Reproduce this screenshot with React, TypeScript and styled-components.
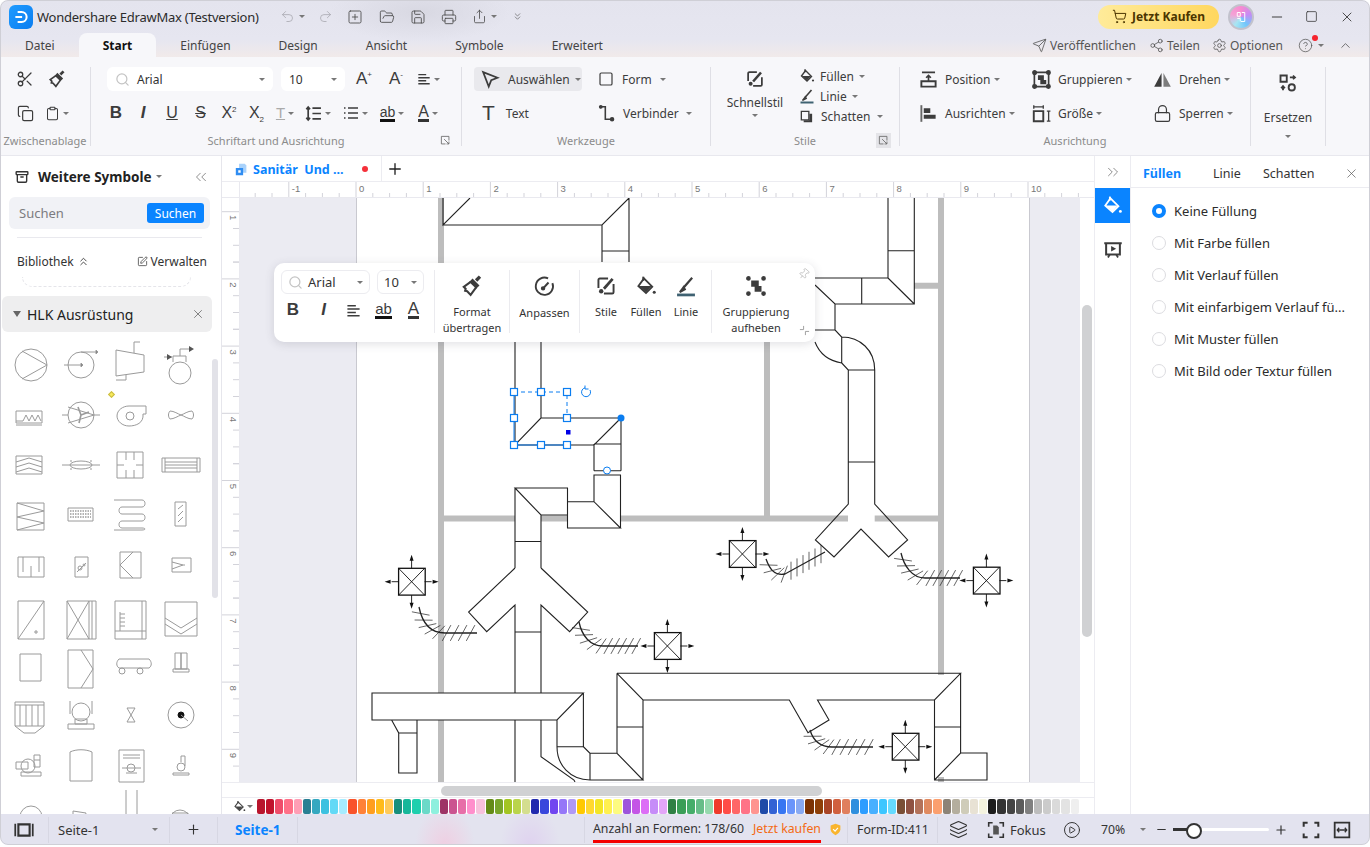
import * as React from 'react'
import styled, { createGlobalStyle } from 'styled-components'
import {
  Undo2, Redo2, SquarePlus, FolderOpen, Save, Printer, Share, ChevronsDown, ShoppingCart, Minus, Square, X,
  Send, Share2, Settings, CircleHelp, ChevronUp, Scissors, Copy, Clipboard, Search, ChevronsLeft, ChevronsRight,
  ChevronsUp, SquarePen, Plus, Lock, Layers, CirclePlay, Pin, Archive
} from 'lucide-react'

const GlobalStyle = createGlobalStyle`
  html, body { margin: 0; padding: 0; background: #fff; }
  body { font-family: "Noto Sans", "Noto Sans CJK SC", sans-serif; font-size: 12px; color: #333; }
  * { box-sizing: border-box; }
`

const Window = styled.div`
  position: relative;
  width: 1370px;
  height: 845px;
  display: flex;
  flex-direction: column;
  overflow: hidden;
  border-radius: 8px;
  background: #fff;
  &::after {
    content: '';
    position: absolute;
    inset: 0;
    border: 1px solid #cfcfd6;
    border-radius: 8px;
    pointer-events: none;
  }
`

const Chrome = styled.header`
  flex: none;
  background:
    radial-gradient(ellipse 90px 30px at 420px 12px, #d8d8e2 0%, transparent 100%),
    linear-gradient(180deg, #e4e4ee 0%, #e6e6f0 70%, #f1eaea 100%);
`

const TitleBar = styled.div`
  height: 33px;
  display: flex;
  align-items: center;
  padding-left: 9px;
`

const Logo = styled.div`
  width: 24px;
  height: 24px;
  border-radius: 6px;
  background: linear-gradient(135deg, #1f9bff, #0b7df0);
  display: flex;
  align-items: center;
  justify-content: center;
`

const AppTitle = styled.div`
  width: 244px;
  padding-left: 4px;
  font-size: 13px;
  letter-spacing: -0.25px;
  color: #2c2c2c;
  white-space: nowrap;
`

const Quick = styled.div<{ $w: number; $off?: boolean }>`
  width: ${p => p.$w}px;
  display: flex;
  align-items: center;
  justify-content: center;
  gap: 4px;
  color: ${p => (p.$off ? '#a9a9b0' : '#4a4a4a')};
`

const TitleRight = styled.div`
  margin-left: auto;
  display: flex;
  align-items: center;
  padding-right: 6px;
`

const BuyPill = styled.div`
  width: 121px;
  height: 24px;
  border-radius: 12px;
  background: linear-gradient(90deg, #ffeb9a, #ffd75f);
  display: flex;
  align-items: center;
  justify-content: center;
  gap: 5px;
  font-size: 12px;
  font-weight: 700;
  color: #4b3500;
`

const Avatar = styled.div`
  width: 26px;
  height: 26px;
  margin: 0 5px 0 9px;
  border-radius: 50%;
  border: 2px solid #c2c2cc;
  background: conic-gradient(#f78bd0, #c58bf5, #72c6fb, #a7e6f2, #f5a1d5, #f78bd0);
  display: flex;
  align-items: center;
  justify-content: center;
`

const WinControl = styled.div`
  width: 35px;
  display: flex;
  align-items: center;
  justify-content: center;
  color: #333;
`

const TabBar = styled.div`
  height: 24px;
  display: flex;
  align-items: stretch;
  padding-left: 1px;
`

const RibbonTab = styled.div<{ $active?: boolean }>`
  padding: 0 24px;
  display: flex;
  align-items: center;
  font-size: 12px;
  border-radius: 8px 8px 0 0;
  font-weight: ${p => (p.$active ? 700 : 400)};
  color: ${p => (p.$active ? '#111' : '#444')};
  background: ${p => (p.$active ? '#f7f7fa' : 'transparent')};
`

const TabActions = styled.div`
  margin-left: auto;
  display: flex;
  align-items: center;
  padding-right: 17px;
  color: #555;
  font-size: 12px;
`

const TabAction = styled.span<{ $mr?: number }>`
  display: flex;
  align-items: center;
  gap: 3px;
  margin-right: ${p => p.$mr ?? 11}px;
  position: relative;
`

const RedDot = styled.i`
  position: absolute;
  top: -3px;
  right: 6px;
  width: 6px;
  height: 6px;
  border-radius: 50%;
  background: #f5242e;
`

const Ribbon = styled.div`
  flex: none;
  height: 99px;
  display: flex;
  background: #f7f7fa;
  border-bottom: 1px solid #e8e8ee;
`

const Group = styled.section<{ $w: number }>`
  width: ${p => p.$w}px;
  display: flex;
  flex-direction: column;
  padding-top: 10px;
`

const GroupSep = styled.div`
  width: 1px;
  margin: 10px 0 9px;
  background: #dfdfe5;
`

const Rows = styled.div`
  flex: 1;
  display: flex;
  flex-direction: column;
  gap: 10px;
`

const Row = styled.div<{ $pl?: number; $gap?: number }>`
  height: 24px;
  display: flex;
  align-items: center;
  padding-left: ${p => p.$pl ?? 0}px;
  gap: ${p => p.$gap ?? 0}px;
`

const Tool = styled.div<{ $w: number; $off?: boolean; $ml?: number }>`
  width: ${p => p.$w}px;
  height: 24px;
  flex: none;
  margin-left: ${p => p.$ml ?? 0}px;
  display: flex;
  align-items: center;
  justify-content: center;
  gap: 3px;
  color: ${p => (p.$off ? '#aaa' : '#3c3c3c')};
`

const Glyph = styled.span<{ $size?: number; $weight?: number; $italic?: boolean; $line?: string; $bar?: string }>`
  font-family: "Liberation Sans", sans-serif;
  font-size: ${p => p.$size ?? 15}px;
  font-weight: ${p => p.$weight ?? 400};
  font-style: ${p => (p.$italic ? 'italic' : 'normal')};
  text-decoration: ${p => p.$line ?? 'none'};
  border-bottom: ${p => (p.$bar ? `3px solid ${p.$bar}` : 'none')};
  line-height: ${p => (p.$bar ? '14px' : '18px')};
  color: inherit;
  sup, sub { font-size: 8px; line-height: 0; }
`

const Caret = styled.i<{ $ml?: number; $mt?: number }>`
  display: inline-block;
  flex: none;
  margin-left: ${p => p.$ml ?? 0}px;
  margin-top: ${p => p.$mt ?? 0}px;
  border-left: 3px solid transparent;
  border-right: 3px solid transparent;
  border-top: 3.5px solid #777;
`

const Combo = styled.div<{ $w: number; $float?: boolean; $ml?: number }>`
  width: ${p => p.$w}px;
  height: 24px;
  flex: none;
  margin-left: ${p => p.$ml ?? 0}px;
  padding: 0 ${p => (p.$float ? 6 : 8)}px;
  border-radius: 6px;
  background: #fff;
  border: ${p => (p.$float ? '1px solid #ececf0' : 'none')};
  display: flex;
  align-items: center;
  gap: ${p => (p.$float ? 5 : 7)}px;
  font-size: ${p => (p.$float ? 13 : 12)}px;
  color: #333;
  i { margin-left: auto; }
`

const LabeledTool = styled.div<{ $w?: number; $bg?: boolean; $gap?: number; $ph?: number }>`
  width: ${p => (p.$w ? `${p.$w}px` : 'auto')};
  height: 24px;
  flex: none;
  display: flex;
  align-items: center;
  gap: ${p => p.$gap ?? 8}px;
  padding-left: ${p => p.$ph ?? 0}px;
  border-radius: 4px;
  background: ${p => (p.$bg ? '#e9e9ed' : 'transparent')};
  color: #3c3c3c;
  font-size: 12px;
  white-space: nowrap;
`

const GroupLabel = styled.div<{ $flush?: boolean }>`
  height: 18px;
  margin: 5px 0 6px;
  padding: 0 ${p => (p.$flush ? 0 : 8)}px;
  display: grid;
  grid-template-columns: 1fr auto 1fr;
  align-items: center;
  font-size: 11px;
  color: #8b8b8b;
  white-space: nowrap;
  span { grid-column: 2; }
`

const DialogCorner = styled.b<{ $bg?: boolean }>`
  grid-column: 3;
  justify-self: end;
  width: 15px;
  height: 15px;
  display: flex;
  align-items: center;
  justify-content: center;
  background: ${p => (p.$bg ? '#e4e4e8' : 'transparent')};
  color: #666;
`

const Columns = styled.div<{ $pl?: number }>`
  flex: 1;
  display: flex;
  padding-left: ${p => p.$pl ?? 0}px;
`

const StackTool = styled.div<{ $w: number; $pt?: number }>`
  width: ${p => p.$w}px;
  flex: none;
  padding-top: ${p => p.$pt ?? 0}px;
  display: flex;
  flex-direction: column;
  align-items: center;
  color: #3c3c3c;
  font-size: 12px;
`

const StackLabel = styled.span<{ $mt: number }>`
  margin-top: ${p => p.$mt}px;
`

const MiniRows = styled.div`
  display: flex;
  flex-direction: column;
  margin-top: -1px;
`

const MiniRow = styled.div<{ $gap?: number }>`
  height: 20px;
  display: flex;
  align-items: center;
  gap: ${p => p.$gap ?? 5}px;
  font-size: 12px;
  color: #3c3c3c;
`

const ToolColumn = styled.div<{ $w: number }>`
  width: ${p => p.$w}px;
  display: flex;
  flex-direction: column;
  gap: 10px;
`

const Main = styled.div`
  flex: none;
  height: 658px;
  display: flex;
`

const Library = styled.aside`
  position: relative;
  width: 222px;
  flex: none;
  overflow: hidden;
  border-right: 1px solid #e6e6ec;
`

const LibHead = styled.div`
  height: 41px;
  display: flex;
  align-items: center;
  padding: 0 11px 0 15px;
  color: #333;
  strong { margin-left: 9px; font-size: 13.5px; color: #222; }
  i { margin-left: 4px; }
  svg:last-child { margin-left: auto; color: #777; }
`

const SearchBox = styled.div`
  height: 32px;
  margin: 0 11px 0 9px;
  padding: 0 6px 0 10px;
  border-radius: 6px;
  background: #f1f2f6;
  display: flex;
  align-items: center;
  justify-content: space-between;
  font-size: 13px;
  color: #7c7c80;
`

const SearchButton = styled.div`
  width: 57px;
  height: 20px;
  border-radius: 3px;
  background: #0a84ff;
  color: #fff;
  font-size: 12px;
  display: flex;
  align-items: center;
  justify-content: center;
`

const LibDivider = styled.div`
  height: 1px;
  margin: 8px 19px 0 17px;
  background: #e9e9ee;
`

const LibRow = styled.div`
  height: 47px;
  padding: 0 14px 0 17px;
  display: flex;
  align-items: center;
  justify-content: space-between;
  font-size: 12.5px;
  color: #333;
`

const LibLink = styled.span`
  display: flex;
  align-items: center;
  gap: 3px;
  font-size: 12px;
`

const DashedEnd = styled.div`
  height: 10px;
  margin: -8px 30px 9px 22px;
  border: 1px dashed #e5e5ea;
  border-top: none;
  border-radius: 0 0 10px 10px;
`

const SectionHead = styled.div`
  height: 36px;
  margin: 0 9px 0 2px;
  padding: 0 7px 0 11px;
  border-radius: 6px;
  background: #eeeeef;
  display: flex;
  align-items: center;
  gap: 6px;
  font-size: 14px;
  color: #222;
  svg { margin-left: auto; color: #555; }
`

const DownTri = styled.i`
  border-left: 4px solid transparent;
  border-right: 4px solid transparent;
  border-top: 6px solid #666;
`

const SymbolGrid = styled.div`
  position: relative;
  padding: 8px 0 0 6px;
  display: grid;
  grid-template-columns: repeat(4, 50px);
  grid-auto-rows: 50px;
`

const YellowDot = styled.i`
  position: absolute;
  left: 109px;
  top: 60px;
  width: 5px;
  height: 5px;
  transform: rotate(45deg);
  background: #f7e95a;
  border: 1px solid #c9bb45;
`

const LibScroll = styled.div`
  position: absolute;
  right: 3px;
  top: 203px;
  width: 6px;
  height: 239px;
  border-radius: 3px;
  background: #e2e2e8;
`

const Center = styled.div`
  width: 872px;
  flex: none;
  display: flex;
  flex-direction: column;
  background: #fff;
`

const DocTabs = styled.div`
  height: 26px;
  display: flex;
  align-items: center;
  border-bottom: 1px solid #ececf1;
`

const DocTab = styled.div`
  width: 160px;
  height: 25px;
  padding: 1px 0 0 13px;
  display: flex;
  align-items: center;
  gap: 5px;
  border-right: 1px solid #ececf1;
  font-size: 12.5px;
  font-weight: 700;
  color: #0a84ff;
  white-space: pre;
  i { width: 6px; height: 6px; margin-left: 13px; border-radius: 50%; background: #f5303a; }
`

const AddTab = styled.div`
  margin-left: 4px;
  color: #222;
  display: flex;
`

const RulerRow = styled.div`
  height: 16px;
  display: flex;
  background: #fff;
  border-bottom: 1px solid #e9e9ef;
`

const RulerCorner = styled.div`
  width: 18px;
  border-right: 1px solid #e9e9ef;
`

const CanvasRow = styled.div`
  height: 584px;
  display: flex;
`

const VRuler = styled.div`
  width: 18px;
  flex: none;
  overflow: hidden;
  border-right: 1px solid #e9e9ef;
`

const Canvas = styled.div`
  position: relative;
  width: 840px;
  flex: none;
  padding-left: 116px;
  background: #ebebf2;
`

const Page = styled.div`
  width: 674px;
  height: 584px;
  background: #fff;
  border-left: 1px solid #c9c9d0;
  border-right: 1px solid #c9c9d0;
  svg { display: block; margin-left: -1px; }
`

const VScrollTrack = styled.div`
  position: relative;
  flex: 1;
  background: #fff;
`

const VScrollThumb = styled.div`
  position: absolute;
  left: 2px;
  top: 107px;
  width: 10px;
  height: 332px;
  border-radius: 5px;
  background: #d0d1d3;
`

const HScrollRow = styled.div`
  height: 15px;
  padding: 3px 0 0 219px;
  border-top: 1px solid #ececf1;
  background: #fff;
`

const HScrollThumb = styled.div`
  width: 381px;
  height: 10px;
  border-radius: 5px;
  background: #d0d1d3;
`

const PaletteRow = styled.div`
  height: 17px;
  display: flex;
  align-items: center;
  padding-left: 11px;
  color: #444;
  border-top: 1px solid #ececf1;
`

const Palette = styled.div`
  margin-left: 4px;
  display: grid;
  grid-template-columns: repeat(91, 8.15px);
  column-gap: 1px;
`

const Swatch = styled.i<{ $c: string }>`
  height: 15px;
  border-radius: 2px;
  background: ${p => p.$c};
`

const Floating = styled.div`
  position: absolute;
  left: 34px;
  top: 65px;
  width: 541px;
  height: 79px;
  padding: 7px 0 0 7px;
  border-radius: 10px;
  background: #fff;
  box-shadow: 0 2px 10px rgba(60, 60, 80, 0.16);
  display: flex;
  color: #3c3c3c;
`

const FloatFont = styled.div`
  width: 153px;
  flex: none;
  display: flex;
  flex-wrap: wrap;
  gap: 4px 7px;
  align-content: flex-start;
`

const FloatSep = styled.div<{ $ml?: number }>`
  width: 1px;
  height: 63px;
  flex: none;
  margin-left: ${p => p.$ml ?? 0}px;
  background: #ebebef;
`

const FloatTool = styled.div<{ $w: number; $ml?: number }>`
  width: ${p => p.$w}px;
  flex: none;
  margin-left: ${p => p.$ml ?? 0}px;
  padding-top: 5px;
  display: flex;
  flex-direction: column;
  align-items: center;
  font-size: 11px;
  line-height: 16px;
  text-align: center;
  color: #333;
  svg { margin-bottom: 7px; color: #3c3c3c; }
`

const FloatPin = styled.div`
  position: absolute;
  right: 5px;
  top: 5px;
  color: #aaa;
  display: flex;
  svg { transform: rotate(40deg); }
`

const FloatCorner = styled.div`
  position: absolute;
  right: 5px;
  bottom: 6px;
  color: #999;
  display: flex;
`

const Rail = styled.div`
  width: 37px;
  flex: none;
  border-left: 1px solid #ececf1;
  border-right: 1px solid #ececf1;
  display: flex;
  flex-direction: column;
  align-items: center;
`

const RailBtn = styled.div<{ $active?: boolean; $h: number }>`
  width: 100%;
  height: ${p => p.$h}px;
  display: flex;
  align-items: center;
  justify-content: center;
  background: ${p => (p.$active ? '#0a84ff' : 'transparent')};
  color: ${p => (p.$active ? '#fff' : '#3c3c3c')};
`

const FillPanel = styled.div`
  flex: 1;
  display: flex;
  flex-direction: column;
`

const FillTabs = styled.div`
  height: 32px;
  display: flex;
  align-items: center;
  padding: 3px 11px 0 12px;
  border-bottom: 1px solid #ececf1;
  font-size: 12.5px;
  color: #333;
  svg { margin-left: auto; color: #555; }
`

const FillTab = styled.span<{ $active?: boolean; $w: number }>`
  width: ${p => p.$w}px;
  font-weight: ${p => (p.$active ? 700 : 400)};
  color: ${p => (p.$active ? '#0a84ff' : '#333')};
`

const RadioList = styled.div`
  padding: 7px 0 0 21px;
  display: flex;
  flex-direction: column;
`

const RadioRow = styled.div`
  height: 32px;
  display: flex;
  align-items: center;
  gap: 8px;
  font-size: 13px;
  color: #2c2c2c;
  white-space: nowrap;
`

const Radio = styled.i<{ $on?: boolean }>`
  width: 14px;
  height: 14px;
  border-radius: 50%;
  border: ${p => (p.$on ? '4px solid #0a84ff' : '1px solid #dcdce0')};
  background: #fff;
`

const StatusBar = styled.footer`
  flex: none;
  height: 31px;
  display: flex;
  align-items: center;
  font-size: 12.3px;
  color: #333;
  background:
    radial-gradient(ellipse 30px 40px at 445px 32px, #efcfe2 0%, transparent 100%),
    radial-gradient(ellipse 30px 40px at 530px 32px, #dfd2ef 0%, transparent 100%),
    #e3e3ef;
`

const StatusCell = styled.div<{ $w: number; $sep?: boolean; $pl?: number; $center?: boolean }>`
  width: ${p => p.$w}px;
  height: 26px;
  flex: none;
  display: flex;
  align-items: center;
  justify-content: ${p => (p.$center ? 'center' : 'flex-start')};
  gap: 5px;
  padding-left: ${p => p.$pl ?? 0}px;
  border-right: ${p => (p.$sep ? '1px solid #d7d7e3' : 'none')};
  white-space: nowrap;
`

const PageName = styled.span`
  font-size: 13px;
`

const ActivePage = styled.b`
  font-size: 13.5px;
  color: #0a84ff;
`

const ShapeCount = styled.span`
  display: flex;
  gap: 9px;
  padding-bottom: 4px;
  margin-top: 4px;
  border-bottom: 3px solid #f40000;
  line-height: 15px;
  em { font-style: normal; color: #f36a13; }
`

const ShieldSlot = styled.span`
  margin-left: 3px;
  display: flex;
`

const ZoomSlider = styled.div`
  position: relative;
  width: 96px;
  height: 3px;
  margin-left: 4px;
  border-radius: 2px;
  background: #fff;
  &::before {
    content: '';
    position: absolute;
    left: 0;
    top: 0;
    width: 20px;
    height: 3px;
    background: #333;
  }
  &::after {
    content: '';
    position: absolute;
    left: 13px;
    top: -5px;
    width: 12px;
    height: 12px;
    border-radius: 50%;
    border: 2px solid #333;
    background: #fff;
  }
`

const Ico: React.FC<{ s?: number; sw?: number; children: React.ReactNode }> = ({ s = 18, sw = 1.4, children }) => (
  <svg viewBox="0 0 16 16" width={s} height={s} fill="none" stroke="currentColor" strokeWidth={sw}>
    {children}
  </svg>
)

const BrushIcon = ({ s = 18 }: { s?: number }) => (
  <Ico s={s} sw={1.5}>
    <path d="M13.8 1.2 11 4" strokeWidth="2.4" />
    <path d="M8.4 3.6 12.4 7.6 11 9 7 5z" fill="currentColor" />
    <path d="M7 5 2 8.6 3.4 10 3 11.5 4.5 11.8 7 14.5 11 9" />
  </Ico>
)
const PointerIcon = () => (
  <Ico s={20}>
    <path d="M2.5 2.5 14 7 9 9 7 14z" />
  </Ico>
)
const ConnectorIcon = () => (
  <Ico s={18}>
    <path d="M3 2.5H6.5V13.5H11" />
    <circle cx="2.5" cy="2.5" r="1" fill="currentColor" />
    <circle cx="12.5" cy="13.5" r="1.3" fill="currentColor" />
  </Ico>
)
const QuickStyleIcon = ({ s = 20 }: { s?: number }) => (
  <Ico s={s}>
    <path d="M9.5 2.5H3.5a1 1 0 0 0-1 1v6M6.5 13.5h6a1 1 0 0 0 1-1v-6" />
    <path d="M12.8 2.8 6.5 10" strokeWidth="2" />
    <circle cx="4.5" cy="11.8" r="1.6" fill="currentColor" stroke="none" />
  </Ico>
)
const BucketIcon = ({ s = 16 }: { s?: number }) => (
  <Ico s={s}>
    <path d="M6.5 2.5 12.5 8.5 8 13 2.5 8z" />
    <path d="M3 8H12L8 12.6z" fill="currentColor" stroke="none" />
    <path d="M6 1.2v3" />
    <circle cx="14" cy="12.5" r="1.1" fill="currentColor" stroke="none" />
  </Ico>
)
const PenLineIcon = ({ s = 18, bar = '#3f6272' }: { s?: number; bar?: string }) => (
  <Ico s={s}>
    <path d="M12.5 2 6 9.5" strokeWidth="1.6" />
    <path d="M6.3 8.8 3.5 12.5 7.2 10.4z" fill="currentColor" />
    <path d="M1.5 14.5h13" stroke={bar} strokeWidth="2" />
  </Ico>
)
const ShadowIcon = () => (
  <Ico s={15}>
    <path d="M2.5 2.5h8v9h-8z" />
    <path d="M11 5h3v9H5v-2h6z" fill="currentColor" stroke="none" />
  </Ico>
)
const PositionIcon = () => (
  <Ico s={19}>
    <path d="M2.5 2h11M8 4.5v5M6 6.5 8 4.5 10 6.5" />
    <path d="M2 9.5h12v4.5H2z" strokeWidth="1.6" />
  </Ico>
)
const AlignIcon = () => (
  <Ico s={19}>
    <path d="M2 1v14" strokeWidth="1.6" stroke="#666" />
    <path d="M4 3.5h5.5v4H4zM4 9h10v3.5H4z" fill="currentColor" stroke="none" />
  </Ico>
)
const GroupIcon = ({ s = 19 }: { s?: number }) => (
  <Ico s={s}>
    <path d="M3 2h10a1 1 0 0 1 1 1v10a1 1 0 0 1-1 1H3a1 1 0 0 1-1-1V3a1 1 0 0 1 1-1z" />
    <path d="M5 4.5h5v4h2V12H7V8.5H5z" fill="currentColor" stroke="none" />
    <circle cx="2.2" cy="2.2" r="1.4" fill="currentColor" />
    <circle cx="13.8" cy="2.2" r="1.4" fill="currentColor" />
    <circle cx="2.2" cy="13.8" r="1.4" fill="currentColor" />
    <circle cx="13.8" cy="13.8" r="1.4" fill="currentColor" />
  </Ico>
)
const SizeIcon = () => (
  <Ico s={19}>
    <path d="M1.5 1v3M9.5 1v3M1.5 2.5h8M12.5 6h3M12.5 14.5h3M14 6v8.5" strokeWidth="1.1" />
    <path d="M1.5 6h8v8.5h-8z" strokeWidth="1.6" />
  </Ico>
)
const FlipIcon = () => (
  <Ico s={19}>
    <path d="M7.2 2.5V14H1z" fill="currentColor" stroke="none" />
    <path d="M8.8 2.5V14H15z" fill="#7c7c7c" stroke="none" />
  </Ico>
)
const ReplaceIcon = () => (
  <Ico s={20}>
    <path d="M2 2h5v5H2zM4 10.5v3.2M2.5 12.2 4 10.5l1.5 1.7" strokeWidth="1.5" />
    <circle cx="11" cy="11.5" r="2.5" strokeWidth="1.5" />
    <path d="M9.5 3.5h4M12 2l1.7 1.5L12 5" strokeWidth="1.3" />
  </Ico>
)
const CornerIcon = () => (
  <Ico s={11} sw={1.2}>
    <path d="M13 8V2H2v11h6" />
    <path d="M6 6 13 13M9.5 13H13V9.5" />
  </Ico>
)
const LinesIcon = ({ s = 16 }: { s?: number }) => (
  <Ico s={s} sw={1.6}>
    <path d="M1.5 3h9M1.5 6.5h13M1.5 10h9M1.5 13.5h13" />
  </Ico>
)
const LineSpacingIcon = () => (
  <Ico s={17} sw={1.6}>
    <path d="M3 2v12M1.2 4 3 2l1.8 2M1.2 12 3 14l1.8-2M7 3h8M7 8h8M7 13h8" />
  </Ico>
)
const BulletIcon = () => (
  <Ico s={16} sw={1.6}>
    <path d="M5 3h10M5 8h10M5 13h10M1 3h1.5M1 8h1.5M1 13h1.5" />
  </Ico>
)
const AdjustIcon = () => (
  <Ico s={23} sw={1.3}>
    <path d="M10.5 2.4a6 6 0 1 0 3 3.2" />
    <path d="M10.8 5.2 7.4 9" strokeWidth="1.4" />
    <circle cx="7" cy="9.3" r=".9" fill="currentColor" />
  </Ico>
)
const UngroupIcon = () => (
  <Ico s={22}>
    <path d="M4.5 4h5.5v4h2v4.2H7V8.5H4.5z" fill="currentColor" stroke="none" />
    <circle cx="2.5" cy="2.5" r="1" fill="currentColor" />
    <circle cx="13.5" cy="2.5" r="1" fill="currentColor" />
    <circle cx="2.5" cy="13.5" r="1" fill="currentColor" />
    <circle cx="13.5" cy="13.5" r="1" fill="currentColor" />
  </Ico>
)
const PresentIcon = () => (
  <Ico s={20}>
    <path d="M1 2.5h14M2.5 2.5v9h11v-9" strokeWidth="1.6" />
    <path d="M6.5 4.8 10.5 7 6.5 9.2z" fill="currentColor" stroke="none" />
    <path d="M4 14l1.5-2.5M12 14l-1.5-2.5" />
  </Ico>
)
const FocusIcon = () => (
  <Ico s={18}>
    <path d="M1.5 5V1.5H5M11 1.5h3.5V5M14.5 11v3.5H11M5 14.5H1.5V11" />
    <path d="M5.5 4H9l1.5 1.5V12h-5z" fill="#555" stroke="none" />
  </Ico>
)
const FitIcon = () => (
  <Ico s={18}>
    <path d="M1.5 1.5h13v13h-13z" strokeWidth="1.6" />
    <path d="M4 8h8M5.5 6 3.8 8l1.7 2M10.5 6l1.7 2-1.7 2" strokeWidth="1.2" />
  </Ico>
)
const FullIcon = () => (
  <Ico s={18} sw={1.8}>
    <path d="M1.5 5V1.5H5M11 1.5h3.5V5M14.5 11v3.5H11M5 14.5H1.5V11" />
  </Ico>
)
const PagesIcon = () => (
  <Ico s={20}>
    <path d="M1 3v10M15 3v10" />
    <path d="M3.5 3.5h9v9h-9z" strokeWidth="1.7" />
  </Ico>
)
const ShieldIcon = () => (
  <svg viewBox="0 0 16 16" width={13} height={13}>
    <path d="M2 3 8 1l6 2v5c0 3-3 5-6 7-3-2-6-4-6-7z" fill="#f9b52e" />
    <path d="M5 7.5 7.5 10 11 6" stroke="#fff" strokeWidth="1.4" fill="none" />
  </svg>
)
const DocIcon = () => (
  <svg viewBox="0 0 16 16" width={13} height={15}>
    <path d="M5 1h7l2 2v9H5z" fill="#a9d2fb" />
    <path d="M1 6h9v9H1z" fill="#2f8df2" />
    <path d="M4 9h3v3H4z" fill="#fff" />
  </svg>
)

const S: React.FC<{ children: React.ReactNode }> = ({ children }) => (
  <svg viewBox="0 0 50 50" width={50} height={50} fill="none" stroke="#9a9a9a" strokeWidth={1}>
    {children}
  </svg>
)

const symbols: React.ReactNode[] = [
  <>
    <circle cx="25" cy="25" r="16" />
    <path d="M16 11 41 25 16 39" />
  </>,
  <>
    <circle cx="25" cy="25" r="13" />
    <path d="M8 25H25M25 12H40" />
    <path d="M25 23v4l2-2zM40 10v4l2-2z" fill="#777" />
  </>,
  <>
    <path d="M10 10 38 15V32L10 36Z" />
    <path d="M28 13V2H34M20 35V40H10" />
  </>,
  <>
    <circle cx="24" cy="33" r="11" />
    <path d="M17 22V16H30V22M24 16V9H33M8 17H16" />
    <path d="M33 6v6l5-3zM11 14v6l5-3z" fill="#555" stroke="none" />
  </>,
  <>
    <path d="M10 21H36V33H10ZM10 35H36" />
    <path d="M10 31H17L20 25 23 31 26 25 29 31 32 25 35 31" />
  </>,
  <>
    <circle cx="25" cy="25" r="13" />
    <path d="M6 25H12M38 25H44M12 17 38 25 12 33" />
    <path d="M25 25 22 17M25 25 33 22M25 25 23 33" strokeWidth="1.6" />
  </>,
  <>
    <path d="M32 16H40V24H37C38 33 30 36 23 36 16 36 11 31 11 26 11 20 17 16 23 16Z" />
    <circle cx="24" cy="26" r="4" />
  </>,
  <path d="M14 21C18 21 22 24 25 25 28 24 32 21 36 21 38 23 38 27 36 29 32 29 28 26 25 25 22 26 18 29 14 29 12 27 12 23 14 21Z" />,
  <>
    <path d="M10 16H36V34H10Z" />
    <path d="M10 22 23 18 36 22M10 27 23 23 36 27M10 32 23 28 36 32" />
  </>,
  <>
    <path d="M6 25H44M14 21H16M34 21H36M14 29H16M34 29H36" />
    <ellipse cx="25" cy="25" rx="11" ry="4" />
  </>,
  <>
    <path d="M11 12H37V38H11ZM11 25H18M30 25H37M20 12V20M28 12V20M20 30V38M28 30V38" />
  </>,
  <>
    <path d="M6 18H44V32H6ZM9 18V32M41 18V32M9 22H41M9 25H41M9 28H41" />
  </>,
  <>
    <path d="M11 13H38V40H11Z" />
    <path d="M11 13 38 21 11 27 38 33 11 40" />
  </>,
  <>
    <path d="M12 18H37V31H12Z" />
    <path d="M14 21H35M14 24H35M14 27H35" strokeDasharray="1.5 1" strokeWidth="1.6" />
  </>,
  <path d="M8 10H36C40 10 40 17 36 17H16C12 17 12 24 16 24H36C40 24 40 31 36 31H16C12 31 12 38 16 38H36C40 38 40 40 36 40H8" />,
  <>
    <path d="M19 12H30V36H19Z" />
    <path d="M22 19 27 15M22 26 27 21M22 32 27 27" />
  </>,
  <path d="M12 17H38V37H12ZM17 17V32M25 26V37M33 17V32" />,
  <>
    <path d="M19 17H32V37H19Z" />
    <path d="M21 32 30 23" />
    <circle cx="24" cy="28" r="2" />
    <circle cx="28" cy="25" r="1" />
  </>,
  <path d="M14 12H35V38H14ZM14 25 27 12M14 25 27 38" />,
  <path d="M16 18H35V32H16ZM16 22 27 25 16 29M27 25 H29" />,
  <path d="M12 11H38V49H12ZM12 49 38 11M30 40V44M28 42H32" />,
  <path d="M11 11H40V49H11ZM11 11 33 49M33 11 11 49M33 11V49M36 11V49" />,
  <path d="M9 11H40V49H9ZM9 41H40M36 11V49M14 22V41M14 24H19M14 28H19M14 32H19M14 36H19" />,
  <path d="M9 12H41V46H9ZM9 28 25 38 41 28M9 34 25 44 41 34" />,
  <path d="M14 5H35V32H14Z" transform="translate(0 9)" />,
  <path d="M13 3H38V41H13ZM26 3 38 22 26 41" transform="translate(-1 7)" />,
  <>
    <path d="M13 19H43C46 22 46 26 43 28H13C10 26 10 22 13 19Z" />
    <circle cx="16" cy="31" r="3" />
    <circle cx="34" cy="31" r="3" />
  </>,
  <path d="M19 13H25V29H19ZM25 13H31V29H25ZM17 29H33V32H17Z" />,
  <path d="M9 12H38V36L29 43H18L9 36ZM9 15H38M14 15V36M20 15V36M26 15V36M32 15V36M9 36H38" />,
  <>
    <circle cx="25" cy="22" r="9" />
    <path d="M14 11V24M36 11V24M12 34H38V39H12ZM19 29H31V34H19Z" />
  </>,
  <path d="M21 18 29 18 21 32H29Z" />,
  <>
    <circle cx="25" cy="25" r="13" />
    <circle cx="25" cy="25" r="3" fill="#111" stroke="#111" />
    <path d="M25 25 32 31" />
  </>,
  <>
    <circle cx="22" cy="26" r="7" />
    <path d="M10 22H22V29H10ZM28 15H34V27H28ZM15 32H35V36H15ZM28 20H34" />
  </>,
  <path d="M14 12C20 9 30 9 36 12V41H14Z" />,
  <>
    <path d="M13 10H38V42H13ZM17 15H34M17 18H34M16 28H35M20 33H31" />
    <circle cx="25" cy="28" r="4" />
  </>,
  <>
    <circle cx="25" cy="27" r="4" />
    <path d="M25 22V16H29V26M17 33H33V35H17Z" />
  </>,
  <>
    <circle cx="25" cy="27" r="11" />
    <path d="M19 26 21 24 23 26 25 24 27 26 29 24 31 26" />
  </>,
  <path d="M17 21 30 23 28 32H17Z" />,
  <path d="M20 -2H31V30H20Z" />,
  <>
    <circle cx="24" cy="30" r="10" />
    <circle cx="24" cy="30" r="3" />
    <path d="M16 23H32V30" />
  </>
]

const lineDuct = `
M443 198V225L470 198M443 225H602L629 198V262M602 225V262M602 251H629
M515 342V445L541 418V342M541 418H621V470.7M594 444H621M515 445H594L621 418M594 444V470.7M594 470.7H621
M515 488H567.5V515H541L515 488ZM515 488V568M541 515V568M515 541.5H541M515 568 468.6 612 486.7 631.7 515 605V693M541 568 587.7 612 569.6 631.7 541 605V693M515 632H541
M567.5 501.7H594L620.5 528H567.5ZM594 501.7V475H620.5V528
M372 693H583.4L557 720H372ZM583.4 693V746.7L590 753.3V780M557 720V746.7H583.4M557 746.7C557 765 570 780 590 780
M515 720V782M541 720V756.7L574 780 575 782
M391.6 720 398.7 733V773H417V720M398.7 733H417
M590 753.3H617L643 780H590M643 700V780M617 673.3V753.3M617 727H643M617 673.3H960.6L934.5 700H817.5L829 720 808 732.7 789.3 700H643L617 673.3
M934.5 700V780H987V753H960.6L934.5 780M960.6 673.3V753M934.5 727H960.6
M888 198V278H815M914.3 198V304H835L815 285M888 250.7H914.3M888 278 914.3 304M861.7 278V304
M835 304V330L841.7 337V363L848.3 370V504L815.4 540 834 557 861 529 888.6 557 907.6 540 874.7 504V370C874.7 350 860 337 841.7 337M835 330H815M815 342C820 355 830 361 841.7 363M848.3 370H874.7M848 462H874.7
`

const walls =
  'M441 198V693M441 720V782M941 198V675M941 777V782M767 342V518M444 518.5H515M541 518.5H567.5M620.5 518.5H848M874.7 518.5H938M914 285.7H938'

const Damper: React.FC<{ cx: number; cy: number }> = ({ cx, cy }) => (
  <g>
    <rect x={cx - 13} y={cy - 13.4} width={26.6} height={26.8} fill="#fff" strokeWidth={1.3} />
    <path d={`M${cx - 13} ${cy - 13.4}L${cx + 13} ${cy + 13.4}M${cx + 13} ${cy - 13.4}L${cx - 13} ${cy + 13.4}`} />
    <path d={`M${cx} ${cy - 13.4}V${cy - 22}M${cx} ${cy + 13.4}V${cy + 22}M${cx - 13} ${cy}H${cx - 20}M${cx + 13} ${cy}H${cx + 20}`} />
    <path
      d={`M${cx} ${cy - 27}l-2 6h4zM${cx} ${cy + 27}l-2 -6h4zM${cx - 27} ${cy}l6 -2v4zM${cx + 27} ${cy}l-6 -2v4z`}
      fill="#111"
      stroke="none"
    />
  </g>
)

type P = [number, number]
const flexDucts: P[][] = [
  [[419, 607], [422, 622], [430, 633], [445, 633], [477, 633]],
  [[579, 622], [582, 636], [590, 646], [603, 646], [638, 646]],
  [[766, 559], [770, 570], [775, 576], [785, 574], [825, 552]],
  [[901, 553], [904, 566], [912, 578], [925, 578], [960, 578]],
  [[810, 730], [813, 740], [820, 747], [832, 747], [873, 747]]
]

const flexPath = (pts: P[]) => {
  const [a, b, c, d, e] = pts
  const samples: P[] = []
  for (let i = 0; i <= 40; i++) {
    const t = i / 40
    const u = 1 - t
    samples.push([
      u * u * u * a[0] + 3 * u * u * t * b[0] + 3 * u * t * t * c[0] + t * t * t * d[0],
      u * u * u * a[1] + 3 * u * u * t * b[1] + 3 * u * t * t * c[1] + t * t * t * d[1]
    ])
  }
  for (let i = 1; i <= 20; i++) {
    samples.push([d[0] + ((e[0] - d[0]) * i) / 20, d[1] + ((e[1] - d[1]) * i) / 20])
  }
  let ticks = ''
  let run = 0
  for (let i = 1; i < samples.length; i++) {
    const dx = samples[i][0] - samples[i - 1][0]
    const dy = samples[i][1] - samples[i - 1][1]
    const len = Math.hypot(dx, dy)
    run += len
    if (run >= 6.4) {
      run = 0
      const ang = Math.atan2(dy, dx) + Math.PI / 2 + 0.5
      const vx = Math.cos(ang) * 9
      const vy = Math.sin(ang) * 9
      const [x, y] = samples[i]
      ticks += `M${(x - vx).toFixed(1)} ${(y - vy).toFixed(1)}L${(x + vx).toFixed(1)} ${(y + vy).toFixed(1)}`
    }
  }
  return {
    curve: `M${a[0]} ${a[1]}C${b[0]} ${b[1]} ${c[0]} ${c[1]} ${d[0]} ${d[1]}L${e[0]} ${e[1]}`,
    ticks
  }
}

const Handle: React.FC<{ x: number; y: number }> = ({ x, y }) => (
  <rect x={x - 3.5} y={y - 3.5} width={7} height={7} fill="#fff" stroke="#0a7df0" strokeWidth={1.2} />
)

const Diagram = () => (
  <svg viewBox="356 198 674 584" width={674} height={584}>
    <path d={walls} fill="none" stroke="#bdbdbd" strokeWidth={6} />
    <path d={lineDuct} fill="none" stroke="#222" strokeWidth={1.1} />
    <g fill="none" stroke="#222">
      {flexDucts.map((pts, i) => {
        const f = flexPath(pts)
        return (
          <g key={i}>
            <path d={f.ticks} strokeWidth={0.7} />
            <path d={f.curve} strokeWidth={1.3} />
          </g>
        )
      })}
    </g>
    <g fill="none" stroke="#111" strokeWidth={0.9}>
      <Damper cx={411.6} cy={581.7} />
      <Damper cx={667.4} cy={646} />
      <Damper cx={742.4} cy={554} />
      <Damper cx={986.4} cy={580.6} />
      <Damper cx={905.3} cy={746.7} />
    </g>
    <path d="M514 392H567V418" fill="none" stroke="#0a7df0" strokeWidth={1} strokeDasharray="4 3" />
    <path d="M514 392V445H567" fill="none" stroke="#0a7df0" strokeWidth={1} />
    {[[514, 392], [541, 392], [567, 392], [514, 418], [567, 418], [514, 445], [541, 445], [567, 445]].map(([x, y]) => (
      <Handle key={`${x}-${y}`} x={x} y={y} />
    ))}
    <rect x={566} y={430} width={4.5} height={4.5} fill="#0000e6" />
    <circle cx={621} cy={418} r={3.5} fill="#0a7df0" />
    <circle cx={607} cy={470.5} r={3.5} fill="#fff" stroke="#0a7df0" />
    <path d="M590 390A4.5 4.5 0 1 1 585 387.8M585 385.5V389H588.5" fill="none" stroke="#0a7df0" strokeWidth={1} />
  </svg>
)

const RULER = 67.2
const HRuler = () => {
  const ticks = []
  for (let i = -2; i <= 10; i++) {
    for (let q = 0; q < 4; q++) {
      const x = 116 + i * RULER + (q * RULER) / 4
      if (x < 0 || x > 854) continue
      ticks.push(<path key={`${i}-${q}`} d={`M${x} ${q === 0 ? 0 : 11}V15`} stroke="#d3d3da" />)
    }
    if (i >= -1) {
      ticks.push(
        <text key={`l${i}`} x={116 + i * RULER + 3} y={10} fontSize={9.5} fill="#777" fontFamily="Liberation Sans">
          {i}
        </text>
      )
    }
  }
  return (
    <svg width={854} height={15}>
      {ticks}
    </svg>
  )
}

const VerticalRuler = () => {
  const ticks = []
  for (let i = 1; i <= 9; i++) {
    const y = 13.7 + (i - 1) * RULER
    for (let q = -1; q < 4; q++) {
      const yy = y + (q * RULER) / 4
      ticks.push(<path key={`${i}-${q}`} d={`M${q === 0 ? 0 : 11} ${yy}H18`} stroke="#d3d3da" />)
    }
    ticks.push(
      <text
        key={`l${i}`}
        x={8}
        y={y + 6}
        fontSize={9.5}
        fill="#777"
        fontFamily="Liberation Sans"
        transform={`rotate(90 8 ${y + 6})`}
        textAnchor="middle"
      >
        {i}
      </text>
    )
  }
  return (
    <svg width={18} height={584}>
      {ticks}
    </svg>
  )
}

const colors = [
  '#b9152d', '#c0122c', '#ef4d6a', '#ff7088', '#ff9eb5', '#2a7f93', '#35a8c0', '#3dc1e0', '#62d9f6', '#a6ecff',
  '#f9532a', '#ff8138', '#ff9e1f', '#ffbb1a', '#ffca58', '#178f7c', '#16b79a', '#1fcfae', '#6bd9c8', '#8ef0de',
  '#9e3366', '#cb5490', '#e76ea8', '#ff8fcc', '#f7c1dc', '#648b17', '#78a52b', '#a3c523', '#bad44c', '#d4de8f',
  '#2129ae', '#3947dc', '#7145f0', '#9577f8', '#b099f5', '#ffc900', '#ffd82f', '#f3e526', '#fff04f', '#fdfb80',
  '#9d55db', '#c455e6', '#dc6ef6', '#c68cf8', '#e3a6f8', '#2f8044', '#3a9e57', '#45ad6a', '#66bd88', '#95d9ae',
  '#ef3a2c', '#ff4d47', '#ff6767', '#ff7387', '#ff9490', '#1f4aa8', '#3362d4', '#3776f2', '#6a95fb', '#88a9f2',
  '#7c3203', '#8e3f08', '#a94527', '#d0603f', '#e07f5e', '#2f8fde', '#2d9dff', '#47b0ff', '#3dc6ff', '#66dbff',
  '#7a4f36', '#8f5242', '#b3725a', '#e08a60', '#fb9f6e', '#8c8377', '#b4ae9e', '#cfccb9', '#e8e2d4', '#f4f3df',
  '#1c1c1c', '#333333', '#444444', '#5b5b5b', '#808080', '#bdbdbd', '#cbcbcb', '#dadada', '#e3e3e3', '#efefef', '#ffffff'
]

const fillOptions = [
  'Keine Füllung',
  'Mit Farbe füllen',
  'Mit Verlauf füllen',
  'Mit einfarbigem Verlauf fü...',
  'Mit Muster füllen',
  'Mit Bild oder Textur füllen'
]

const Header = () => (
  <Chrome>
    <TitleBar>
      <Logo>
        <svg viewBox="0 0 16 16" width={18} height={18} fill="none" stroke="#fff" strokeWidth={1.8}>
          <path d="M5 3.5h3.5a4.5 4.5 0 0 1 0 9H5M3 8h6" />
        </svg>
      </Logo>
      <AppTitle>Wondershare EdrawMax (Testversion)</AppTitle>
      <Quick $w={30} $off><Undo2 size={15} strokeWidth={1.3} /><Caret /></Quick>
      <Quick $w={36} $off><Redo2 size={15} strokeWidth={1.3} /></Quick>
      <Quick $w={24}><SquarePlus size={16} strokeWidth={1.3} /></Quick>
      <Quick $w={40}><FolderOpen size={16} strokeWidth={1.3} /></Quick>
      <Quick $w={22}><Save size={16} strokeWidth={1.3} /></Quick>
      <Quick $w={40}><Printer size={16} strokeWidth={1.3} /></Quick>
      <Quick $w={30}><Share size={15} strokeWidth={1.3} /><Caret /></Quick>
      <Quick $w={36}><ChevronsDown size={11} strokeWidth={1.3} /></Quick>
      <TitleRight>
        <BuyPill><ShoppingCart size={15} strokeWidth={1.6} />Jetzt Kaufen</BuyPill>
        <Avatar>
          <svg viewBox="0 0 16 16" width={12} height={12} fill="none" stroke="#fff" strokeWidth={1.3}>
            <path d="M3 2h4v5H3zM9 2h4M13 2v12H8M3 10h4v4" />
          </svg>
        </Avatar>
        <WinControl><Minus size={16} strokeWidth={1.4} /></WinControl>
        <WinControl><Square size={13} strokeWidth={1.4} /></WinControl>
        <WinControl><X size={16} strokeWidth={1.3} /></WinControl>
      </TitleRight>
    </TitleBar>
    <TabBar>
      <RibbonTab>Datei</RibbonTab>
      <RibbonTab $active>Start</RibbonTab>
      <RibbonTab>Einfügen</RibbonTab>
      <RibbonTab>Design</RibbonTab>
      <RibbonTab>Ansicht</RibbonTab>
      <RibbonTab>Symbole</RibbonTab>
      <RibbonTab>Erweitert</RibbonTab>
      <TabActions>
        <TabAction $mr={13}><Send size={15} strokeWidth={1.3} />Veröffentlichen</TabAction>
        <TabAction $mr={12}><Share2 size={15} strokeWidth={1.3} />Teilen</TabAction>
        <TabAction $mr={15}><Settings size={15} strokeWidth={1.3} />Optionen</TabAction>
        <TabAction $mr={14}>
          <CircleHelp size={15} strokeWidth={1.2} /><RedDot /><Caret $ml={2} />
        </TabAction>
        <ChevronUp size={15} strokeWidth={1.3} />
      </TabActions>
    </TabBar>
  </Chrome>
)

const RibbonBar = () => (
  <Ribbon>
    <Group $w={90}>
      <Rows>
        <Row $pl={13} $gap={8}>
          <Tool $w={24}><Scissors size={18} strokeWidth={1.7} /></Tool>
          <Tool $w={24}><BrushIcon /></Tool>
        </Row>
        <Row $pl={13} $gap={8}>
          <Tool $w={24}><Copy size={17} strokeWidth={1.7} /></Tool>
          <Tool $w={24}><Clipboard size={17} strokeWidth={1.7} /><Caret /></Tool>
        </Row>
      </Rows>
      <GroupLabel $flush><span>Zwischenablage</span></GroupLabel>
    </Group>
    <GroupSep />
    <Group $w={370}>
      <Rows>
        <Row $pl={16}>
          <Combo $w={166}><Search size={15} color="#c4c4c4" />Arial<Caret /></Combo>
          <Combo $w={64} $ml={8}>10<Caret /></Combo>
          <Tool $w={30} $ml={4}><Glyph $size={17}>A<sup>+</sup></Glyph></Tool>
          <Tool $w={30} $ml={2}><Glyph $size={17}>A<sup>-</sup></Glyph></Tool>
          <Tool $w={34}><LinesIcon s={14} /><Caret /></Tool>
        </Row>
        <Row $pl={12}>
          <Tool $w={26}><Glyph $size={17} $weight={700}>B</Glyph></Tool>
          <Tool $w={28}><Glyph $size={17} $weight={700} $italic>I</Glyph></Tool>
          <Tool $w={30}><Glyph $size={16} $line="underline">U</Glyph></Tool>
          <Tool $w={27}><Glyph $size={16} $line="line-through">S</Glyph></Tool>
          <Tool $w={30}><Glyph $size={16}>X<sup>2</sup></Glyph></Tool>
          <Tool $w={25}><Glyph $size={16}>X<sub>2</sub></Glyph></Tool>
          <Tool $w={32} $off><Glyph $size={15} $line="underline">T</Glyph><Caret /></Tool>
          <Tool $w={34}><LineSpacingIcon /><Caret /></Tool>
          <Tool $w={40}><BulletIcon /><Caret /></Tool>
          <Tool $w={34}><Glyph $size={14} $bar="#111">ab</Glyph><Caret /></Tool>
          <Tool $w={38}><Glyph $size={16} $bar="#333">A</Glyph><Caret /></Tool>
        </Row>
      </Rows>
      <GroupLabel>
        <span>Schriftart und Ausrichtung</span>
        <DialogCorner><CornerIcon /></DialogCorner>
      </GroupLabel>
    </Group>
    <GroupSep />
    <Group $w={248}>
      <Rows>
        <Row $pl={12} $gap={16}>
          <LabeledTool $w={108} $bg $ph={6}><PointerIcon />Auswählen<Caret $ml={-3} /></LabeledTool>
          <LabeledTool $gap={8}><Square size={16} strokeWidth={1.8} />Form<Caret /></LabeledTool>
        </Row>
        <Row $pl={20}>
          <LabeledTool $w={116} $gap={11}><Glyph $size={21}>T</Glyph>Text</LabeledTool>
          <LabeledTool $gap={7}><ConnectorIcon />Verbinder<Caret /></LabeledTool>
        </Row>
      </Rows>
      <GroupLabel><span>Werkzeuge</span></GroupLabel>
    </Group>
    <GroupSep />
    <Group $w={188}>
      <Columns>
        <StackTool $w={88}>
          <Tool $w={24}><QuickStyleIcon /></Tool>
          <StackLabel $mt={3}>Schnellstil</StackLabel>
          <Caret $mt={3} />
        </StackTool>
        <MiniRows>
          <MiniRow><BucketIcon />Füllen<Caret /></MiniRow>
          <MiniRow><PenLineIcon s={16} />Linie<Caret /></MiniRow>
          <MiniRow $gap={7}><ShadowIcon />Schatten<Caret /></MiniRow>
        </MiniRows>
      </Columns>
      <GroupLabel>
        <span>Stile</span>
        <DialogCorner $bg><CornerIcon /></DialogCorner>
      </GroupLabel>
    </Group>
    <GroupSep />
    <Group $w={350}>
      <Columns $pl={19}>
        <ToolColumn $w={113}>
          <LabeledTool $gap={7}><PositionIcon />Position<Caret $ml={-3} /></LabeledTool>
          <LabeledTool $gap={7}><AlignIcon />Ausrichten<Caret $ml={-4} /></LabeledTool>
        </ToolColumn>
        <ToolColumn $w={121}>
          <LabeledTool $gap={7}><GroupIcon />Gruppieren<Caret $ml={-4} /></LabeledTool>
          <LabeledTool $gap={7}><SizeIcon />Größe<Caret $ml={-4} /></LabeledTool>
        </ToolColumn>
        <ToolColumn $w={90}>
          <LabeledTool $gap={7}><FlipIcon />Drehen<Caret $ml={-4} /></LabeledTool>
          <LabeledTool $gap={7}><Lock size={19} strokeWidth={1.5} />Sperren<Caret $ml={-4} /></LabeledTool>
        </ToolColumn>
      </Columns>
      <GroupLabel><span>Ausrichtung</span></GroupLabel>
    </Group>
    <GroupSep />
    <Group $w={74}>
      <StackTool $w={74} $pt={4}>
        <Tool $w={24}><ReplaceIcon /></Tool>
        <StackLabel $mt={14}>Ersetzen</StackLabel>
        <Caret $mt={9} />
      </StackTool>
    </Group>
    <GroupSep />
  </Ribbon>
)

const LibraryPanel = () => (
  <Library>
    <LibHead>
      <Archive size={14} strokeWidth={2.4} />
      <strong>Weitere Symbole</strong>
      <Caret />
      <ChevronsLeft size={18} strokeWidth={1.1} />
    </LibHead>
    <SearchBox>
      Suchen
      <SearchButton>Suchen</SearchButton>
    </SearchBox>
    <LibDivider />
    <LibRow>
      <LibLink>Bibliothek <ChevronsUp size={13} strokeWidth={1.6} /></LibLink>
      <LibLink><SquarePen size={11} strokeWidth={1.6} />Verwalten</LibLink>
    </LibRow>
    <DashedEnd />
    <SectionHead>
      <DownTri />
      HLK Ausrüstung
      <X size={14} strokeWidth={1.2} />
    </SectionHead>
    <SymbolGrid>
      {symbols.map((icon, i) => <S key={i}>{icon}</S>)}
      <YellowDot />
    </SymbolGrid>
    <LibScroll />
  </Library>
)

const FloatingToolbar = () => (
  <Floating>
    <FloatFont>
      <Combo $w={89} $float><Search size={15} color="#c4c4c4" />Arial<Caret /></Combo>
      <Combo $w={47} $float>10<Caret /></Combo>
      <Tool $w={24}><Glyph $size={17} $weight={700}>B</Glyph></Tool>
      <Tool $w={23}><Glyph $size={17} $weight={700} $italic>I</Glyph></Tool>
      <Tool $w={23}><LinesIcon s={15} /></Tool>
      <Tool $w={23}><Glyph $size={15} $bar="#111">ab</Glyph></Tool>
      <Tool $w={23}><Glyph $size={17} $bar="#333">A</Glyph></Tool>
    </FloatFont>
    <FloatSep />
    <FloatTool $w={74}><BrushIcon s={22} />Format<br />übertragen</FloatTool>
    <FloatSep />
    <FloatTool $w={69}><AdjustIcon />Anpassen</FloatTool>
    <FloatSep />
    <FloatTool $w={46} $ml={3}><QuickStyleIcon s={22} />Stile</FloatTool>
    <FloatTool $w={40} $ml={-3}><BucketIcon s={22} />Füllen</FloatTool>
    <FloatTool $w={40}><PenLineIcon s={22} />Linie</FloatTool>
    <FloatSep $ml={5} />
    <FloatTool $w={88}><UngroupIcon />Gruppierung<br />aufheben</FloatTool>
    <FloatPin><Pin size={12} strokeWidth={1.2} /></FloatPin>
    <FloatCorner>
      <svg viewBox="0 0 12 12" width={11} height={11} fill="none" stroke="currentColor">
        <path d="M1 5H5V1M7 11V7H11" />
      </svg>
    </FloatCorner>
  </Floating>
)

const CanvasArea = () => (
  <Center>
    <DocTabs>
      <DocTab><DocIcon />Sanitär  Und ...<i /></DocTab>
      <AddTab><Plus size={18} strokeWidth={1.8} /></AddTab>
    </DocTabs>
    <RulerRow>
      <RulerCorner />
      <HRuler />
    </RulerRow>
    <CanvasRow>
      <VRuler><VerticalRuler /></VRuler>
      <Canvas>
        <Page><Diagram /></Page>
        <FloatingToolbar />
      </Canvas>
      <VScrollTrack><VScrollThumb /></VScrollTrack>
    </CanvasRow>
    <HScrollRow><HScrollThumb /></HScrollRow>
    <PaletteRow>
      <BucketIcon s={13} /><Caret $ml={1} />
      <Palette>
        {colors.map((c, i) => <Swatch key={i} $c={c} />)}
      </Palette>
    </PaletteRow>
  </Center>
)

const SidePanel = () => (
  <>
    <Rail>
      <RailBtn $h={32}><ChevronsRight size={18} strokeWidth={1.1} color="#777" /></RailBtn>
      <RailBtn $h={35} $active><BucketIcon s={21} /></RailBtn>
      <RailBtn $h={54}><PresentIcon /></RailBtn>
    </Rail>
    <FillPanel>
      <FillTabs>
        <FillTab $w={70} $active>Füllen</FillTab>
        <FillTab $w={50}>Linie</FillTab>
        <FillTab $w={60}>Schatten</FillTab>
        <X size={15} strokeWidth={1.1} />
      </FillTabs>
      <RadioList>
        {fillOptions.map((label, i) => (
          <RadioRow key={label}><Radio $on={i === 0} />{label}</RadioRow>
        ))}
      </RadioList>
    </FillPanel>
  </>
)

const Footer = () => (
  <StatusBar>
    <StatusCell $w={49} $sep $center><PagesIcon /></StatusCell>
    <StatusCell $w={121} $sep $pl={9}>
      <PageName>Seite-1</PageName><Caret $ml={48} />
    </StatusCell>
    <StatusCell $w={48} $sep $center><Plus size={15} strokeWidth={1.8} /></StatusCell>
    <StatusCell $w={80} $sep $pl={17}><ActivePage>Seite-1</ActivePage></StatusCell>
    <StatusCell $w={287} $sep />
    <StatusCell $w={263} $sep $pl={8}>
      <ShapeCount>Anzahl an Formen: 178/60<em>Jetzt kaufen</em></ShapeCount>
      <ShieldSlot><ShieldIcon /></ShieldSlot>
    </StatusCell>
    <StatusCell $w={90} $sep $pl={9}>Form-ID:411</StatusCell>
    <StatusCell $w={41} $center><Layers size={19} strokeWidth={1.4} /></StatusCell>
    <StatusCell $w={82} $pl={8}><FocusIcon /><PageName>Fokus</PageName></StatusCell>
    <StatusCell $w={22} $center><CirclePlay size={18} strokeWidth={1.3} /></StatusCell>
    <StatusCell $w={70} $pl={18}>70%<Caret $ml={10} /></StatusCell>
    <StatusCell $w={16} $center><Minus size={13} strokeWidth={2} /></StatusCell>
    <ZoomSlider />
    <StatusCell $w={24} $center><Plus size={14} strokeWidth={2} /></StatusCell>
    <StatusCell $w={36} $center><FullIcon /></StatusCell>
    <StatusCell $w={26} $center><FitIcon /></StatusCell>
  </StatusBar>
)

const App = () => (
  <>
    <GlobalStyle />
    <Window>
      <Header />
      <RibbonBar />
      <Main>
        <LibraryPanel />
        <CanvasArea />
        <SidePanel />
      </Main>
      <Footer />
    </Window>
  </>
)

export default App
